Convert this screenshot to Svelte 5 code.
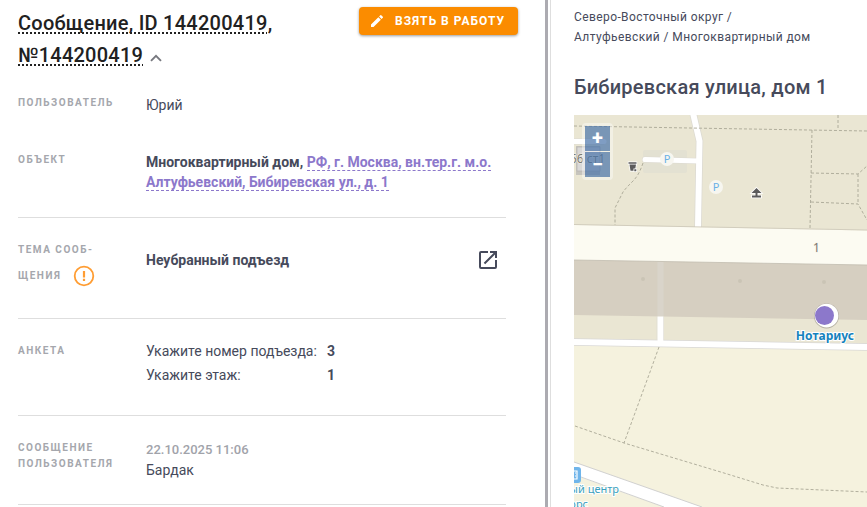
<svelte:options runes={true} />

<script lang="ts">
  type Point = { x: number; y: number };

  const answers = [
    { question: "Укажите номер подъезда:", value: "3" },
    { question: "Укажите этаж:", value: "1" }
  ];

  const footpaths = [
    "M0 11L116 13L293 16",
    "M264 0V15",
    "M238 15L236 113",
    "M237 58L284 59L293 51",
    "M237 87L284 89L293 105",
    "M284 59V89",
    "M69 48C66 57 63 62 59 66C55 70 52 73 49 77L41 93V110",
    "M85 232L76 257L50 328",
    "M1 311L50 328L150 358L189 370L203 373L293 377"
  ];

  const parkings: Point[] = [
    { x: 93, y: 44 },
    { x: 142, y: 72 }
  ];

  const entrances: Point[] = [
    { x: 69, y: 164 },
    { x: 166, y: 166 },
    { x: 250, y: 167 }
  ];

  let expanded = $state(true);
</script>

<div class="layout">
  <main class="message">
    <header class="message-header">
      <h1>
        <span class="underlined">Сообщение, ID 144200419</span>,
        <span class="underlined">№144200419</span>
        <button
          class="toggle"
          class:collapsed={!expanded}
          aria-label="Свернуть"
          aria-expanded={expanded}
          onclick={() => (expanded = !expanded)}
        >
          <svg viewBox="0 0 12 8" width="12" height="8">
            <path d="M1 6.8L6 1.8L11 6.8" fill="none" stroke="currentColor" stroke-width="1.9" />
          </svg>
        </button>
      </h1>
      <button class="take">
        <svg viewBox="0 0 24 24" width="16" height="16">
          <path
            fill="currentColor"
            d="M3 17.25V21h3.75L17.81 9.94l-3.75-3.75L3 17.25zM20.71 7.04a1 1 0 0 0 0-1.41l-2.34-2.34a1 1 0 0 0-1.41 0l-1.83 1.83 3.75 3.75 1.83-1.83z"
          />
        </svg>
        Взять в работу
      </button>
    </header>

    {#if expanded}
      <dl class="fields">
        <div class="row row-user">
          <dt>Пользователь</dt>
          <dd>Юрий</dd>
        </div>

        <div class="row row-object divided">
          <dt>Объект</dt>
          <dd class="strong">
            Многоквартирный дом,
            <a class="address" href="#object">РФ, г. Москва, вн.тер.г. м.о. Алтуфьевский, Бибиревская ул., д. 1</a>
          </dd>
        </div>

        <div class="row row-theme divided">
          <dt>
            Тема сооб-<br />щения
            <svg class="warning" viewBox="0 0 22 22" width="22" height="22">
              <circle cx="11" cy="11" r="9.3" fill="none" stroke="currentColor" stroke-width="1.8" />
              <path d="M9.9 6h2.2v6.4H9.9zM9.9 13.8h2.2v2.2H9.9z" fill="currentColor" />
            </svg>
          </dt>
          <dd class="strong theme">
            <span>Неубранный подъезд</span>
            <a class="open" href="#theme" aria-label="Открыть">
              <svg viewBox="0 0 24 24" width="24" height="24">
                <path
                  fill="currentColor"
                  d="M19 19H5V5h7V3H5a2 2 0 0 0-2 2v14a2 2 0 0 0 2 2h14a2 2 0 0 0 2-2v-7h-2v7zM14 3v2h3.59l-9.83 9.83 1.41 1.41L19 6.41V10h2V3h-7z"
                />
              </svg>
            </a>
          </dd>
        </div>

        <div class="row row-answers divided">
          <dt>Анкета</dt>
          <dd class="answers">
            {#each answers as answer (answer.question)}
              <span>{answer.question}</span>
              <b>{answer.value}</b>
            {/each}
          </dd>
        </div>

        <div class="row divided">
          <dt>Сообщение пользователя</dt>
          <dd>
            <time datetime="2025-10-22T11:06">22.10.2025 11:06</time>
            Бардак
          </dd>
        </div>
      </dl>
    {/if}
  </main>

  <div class="splitter"></div>

  <aside class="place">
    <nav>
      <a href="#district">Северо-Восточный округ</a> /
      <a href="#area">Алтуфьевский</a> /
      <a href="#type">Многоквартирный дом</a>
    </nav>
    <h2>Бибиревская улица, дом 1</h2>

    <div class="map">
      <svg class="tiles" viewBox="0 0 293 392" preserveAspectRatio="xMinYMin slice">
        <rect width="293" height="392" fill="#eae6d3" />
        <rect x="69" y="35" width="44" height="23" rx="2" fill="#e3e1d2" />

        <!-- driveways -->
        <g fill="none" stroke="#dcdad2">
          <path d="M119 -2L125.5 26L124 112" stroke-width="7.5" />
          <path d="M71 44.5L125 46" stroke-width="6" stroke-linecap="round" />
          <path d="M0 26.5H30" stroke-width="6" />
        </g>
        <g fill="none" stroke="#fff">
          <path d="M119 -2L125.5 26L124 112" stroke-width="6" />
          <path d="M71 44.5L125 46" stroke-width="5" stroke-linecap="round" />
          <path d="M0 26.5H30" stroke-width="5" stroke-linecap="round" />
        </g>

        <rect x="2" y="31" width="24" height="29" fill="#c6c4bd" />
        <rect x="3" y="32" width="23" height="24" fill="#d9d8d7" stroke="#b5b3af" stroke-width="0.7" />
        <text class="house" x="-4" y="48">56 ст1</text>

        <!-- building 1 and the ground around it -->
        <path d="M0 110L293 115.5V151L0 145.5Z" fill="#fcfbf2" />
        <path d="M0 109.5L293 115" stroke="#cbc7b8" stroke-width="0.8" />
        <path d="M0 145L293 150V205L0 200Z" fill="#d6cfc1" />
        <path d="M0 145L293 150" stroke="#c2bcb0" stroke-width="0.8" />
        <path d="M83.5 147H89.5V201.5H83.5Z" fill="#d9d4ca" />
        <path d="M0 230L293 235V392H0Z" fill="#f5f2de" />
        <path d="M0 227L293 232" stroke="#d9d8d6" stroke-width="7.5" />
        <path d="M83 201.5V226M89.5 201.5V226" stroke="#dddbd4" stroke-width="0.8" />
        <path d="M0 227L293 232" stroke="#fff" stroke-width="6" />
        <path d="M83.5 201.5H89.3V227H83.5Z" fill="#fff" />

        <path d="M0 347L128 392H90L0 360Z" fill="#fff" />
        <path d="M0 347L128 392M0 359.5L90 392" stroke="#ccc" stroke-width="0.9" />

        {#each footpaths as path (path)}
          <path d={path} fill="none" stroke="#a9a795" stroke-width="0.9" stroke-dasharray="3 2" />
        {/each}

        {#each entrances as entrance (entrance.x)}
          <circle cx={entrance.x} cy={entrance.y} r="2" fill="#cac4b5" />
        {/each}

        {#each parkings as parking (parking.x)}
          <circle cx={parking.x} cy={parking.y} r="7" fill="#f7f6f0" />
          <text class="parking" x={parking.x} y={parking.y + 4}>P</text>
        {/each}

        <!-- waste bin -->
        <path
          d="M54.5 47.2H62.5V48.8H54.5ZM55.5 49.5H62L61.3 53.5H59.5V55.8H56.5ZM60.3 54.3H62.3V56.3H60.3Z"
          fill="#5c5b5b"
          stroke="#fff"
          stroke-width="1.4"
          paint-order="stroke"
        />

        <!-- shelter -->
        <path
          d="M182.5 73L187.5 78H183.5V80.5H187V82.5H178V80.5H181.5V78H177.5Z"
          fill="#5c5b5b"
          stroke="#fff"
          stroke-width="1.6"
          paint-order="stroke"
        />

        <text class="house" x="239" y="137">1</text>

        <!-- shopping centre -->
        <rect x="-9" y="352" width="16" height="16" rx="3" fill="#70b5ea" />
        <path d="M-4 364V356H3V364ZM-1 358H0M1 358H2M-1 361H0M1 361H2" fill="none" stroke="#fff" stroke-width="1.2" />
        <text class="poi" x="45" y="378">ый центр</text>
        <text class="poi" x="14" y="393">орс</text>

        <circle cx="252.5" cy="201" r="12.5" fill="#8f8a80" opacity="0.6" />
        <circle cx="252.5" cy="200.7" r="11.9" fill="#fff" />
        <circle cx="250.5" cy="200.5" r="9.5" fill="#8c78cb" />
        <text class="notary" x="251" y="225">Нотариус</text>
      </svg>

      <div class="zoom">
        <button aria-label="Приблизить">+</button>
        <button aria-label="Отдалить">−</button>
      </div>
    </div>
  </aside>
</div>

<style>
  :global(body) {
    margin: 0;
    background: #fff;
  }

  .layout {
    display: grid;
    grid-template-columns: minmax(0, 1fr) 3px 319px;
    height: 100vh;
    overflow: hidden;
    font-family: Roboto, "Liberation Sans", sans-serif;
    font-size: 14px;
    line-height: 20px;
    color: #464a5b;
  }

  button {
    font-family: inherit;
    border: 0;
    padding: 0;
    cursor: pointer;
  }

  .message {
    padding: 7px 39px 0 18px;
  }

  .message-header {
    display: flex;
    justify-content: space-between;
    align-items: flex-start;
    gap: 24px;
    margin-right: -12px;
  }

  h1 {
    margin: 0;
    font-size: 20px;
    font-weight: 500;
    line-height: 32px;
    letter-spacing: 0.25px;
    color: #212121;
  }

  .underlined {
    text-decoration: underline dotted 2px;
    text-decoration-skip-ink: none;
    text-underline-offset: 2px;
  }

  .toggle {
    margin-left: 2px;
    background: none;
    color: #77787f;
    line-height: 8px;
  }

  .toggle.collapsed svg {
    transform: rotate(180deg);
  }

  .take {
    display: flex;
    align-items: center;
    gap: 10px;
    height: 28px;
    padding: 0 13px 0 10px;
    border-radius: 4px;
    background: #fb8c00;
    box-shadow: 0 1px 3px rgba(0, 0, 0, 0.4);
    color: #fff;
    font-size: 12px;
    font-weight: 700;
    letter-spacing: 1px;
    text-transform: uppercase;
    white-space: nowrap;
  }

  .fields {
    margin: 0;
  }

  .row {
    display: grid;
    grid-template-columns: 104px minmax(0, 1fr);
    column-gap: 24px;
    padding: 24px 0;
  }

  .row-user {
    padding-bottom: 13px;
  }

  .row-object {
    padding-bottom: 25px;
  }

  .row-theme {
    padding: 19px 0 29px;
  }

  .row-answers {
    padding-bottom: 32px;
  }

  .divided {
    border-bottom: 1px solid #dedede;
  }

  dt {
    font-size: 10px;
    font-weight: 700;
    line-height: 16px;
    letter-spacing: 1.5px;
    text-transform: uppercase;
    color: #a5a7ad;
  }

  dd {
    margin: 0;
  }

  .strong {
    font-weight: 700;
  }

  .address {
    color: #8c78cb;
    text-decoration: none;
    border-bottom: 1px dashed #8c78cb;
  }

  .row-theme dt {
    line-height: 26px;
  }

  .warning {
    margin-left: 8px;
    vertical-align: middle;
    color: #ff9d33;
  }

  .theme {
    display: flex;
    justify-content: space-between;
    align-items: center;
    height: 46px;
    padding-right: 6px;
  }

  .open {
    display: flex;
    color: #464a5b;
  }

  .answers {
    display: grid;
    grid-template-columns: auto 1fr;
    column-gap: 10px;
    margin: -4px 0;
    line-height: 24px;
  }

  time {
    display: block;
    font-size: 13px;
    font-weight: 500;
    color: #a1a3aa;
  }

  .splitter {
    background: #acabb1;
  }

  .place {
    display: flex;
    flex-direction: column;
    margin-left: 2px;
    padding: 7px 0 0 23px;
    border-left: 1px solid #dedede;
  }

  nav {
    padding-right: 48px;
    font-size: 12px;
    letter-spacing: 0.4px;
  }

  nav a {
    color: inherit;
    text-decoration: none;
  }

  h2 {
    margin: 26px 0 14px;
    font-size: 20px;
    font-weight: 500;
    line-height: 28px;
    letter-spacing: 0.25px;
  }

  .map {
    position: relative;
    flex: 1;
    min-height: 0;
    overflow: hidden;
  }

  .tiles {
    display: block;
    width: 100%;
    height: 100%;
    font-family: "Noto Sans", "Open Sans", sans-serif;
    font-size: 12px;
  }

  .house {
    fill: #7b7972;
    stroke: #f4f2ea;
    stroke-width: 1px;
    paint-order: stroke;
  }

  .parking {
    font-size: 11px;
    fill: #69b0e6;
    text-anchor: middle;
  }

  .poi {
    font-size: 11px;
    fill: #3c9fbe;
    stroke: #fff;
    stroke-width: 2px;
    paint-order: stroke;
    text-anchor: end;
  }

  .notary {
    font-weight: 700;
    fill: #1582bd;
    stroke: #fff;
    stroke-width: 2px;
    paint-order: stroke;
    text-anchor: middle;
  }

  .zoom {
    position: absolute;
    top: 8px;
    left: 8px;
    display: grid;
    gap: 1px;
    padding: 3px;
    border-radius: 4px;
    background: rgba(255, 255, 255, 0.4);
  }

  .zoom button {
    width: 25px;
    height: 25px;
    background: rgba(0, 60, 136, 0.5);
    color: #fff;
    font-size: 20px;
    font-weight: 700;
    line-height: 25px;
  }
</style>
